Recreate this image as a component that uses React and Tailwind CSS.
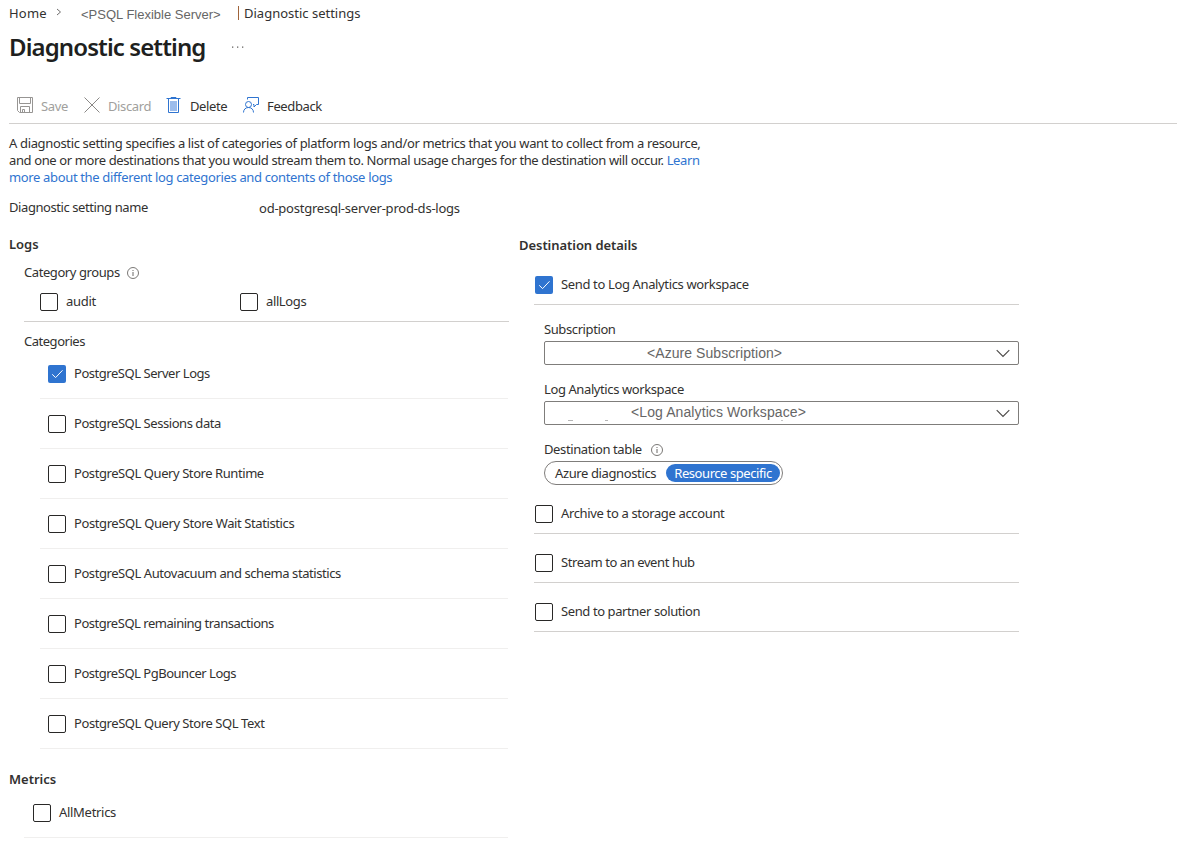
import React from "react";

const categories = [
  { label: "PostgreSQL Server Logs", checked: true, tracking: "tracking-[-0.46px]" },
  { label: "PostgreSQL Sessions data", tracking: "tracking-[-0.45px]" },
  { label: "PostgreSQL Query Store Runtime", tracking: "tracking-[-0.43px]" },
  { label: "PostgreSQL Query Store Wait Statistics", tracking: "tracking-[-0.4px]" },
  { label: "PostgreSQL Autovacuum and schema statistics", tracking: "tracking-[-0.43px]" },
  { label: "PostgreSQL remaining transactions", tracking: "tracking-[-0.48px]" },
  { label: "PostgreSQL PgBouncer Logs", tracking: "tracking-[-0.48px]" },
  { label: "PostgreSQL Query Store SQL Text", tracking: "tracking-[-0.42px]" },
];

function Checkbox({ label, checked, tracking = "" }) {
  return (
    <label className="flex h-[18px] items-center gap-2">
      {checked ? (
        <span className="flex size-[18px] shrink-0 items-center justify-center rounded-[2px] bg-[#2f74d0]">
          <svg width="18" height="18" viewBox="0 0 18 18" fill="none" stroke="#fff" strokeWidth="1">
            <path d="M4.200 9.300 7.600 12.600 14.500 5.300" />
          </svg>
        </span>
      ) : (
        <span className="size-[18px] shrink-0 rounded-[2px] border border-[#292827] bg-white" />
      )}
      <span className={"-mt-px whitespace-nowrap " + tracking}>{label}</span>
    </label>
  );
}

function InfoIcon() {
  return (
    <svg width="12" height="12" viewBox="0 0 12 12" fill="none" stroke="#6b6967">
      <circle cx="6" cy="6" r="5.5" strokeWidth="0.9" />
      <path d="M6 5v4M6 3v1" />
    </svg>
  );
}

function Select({ value, className, children }) {
  return (
    <div className="relative flex h-6 w-[475px] items-center justify-between rounded-[2px] border border-[#7f7d7b] pr-[8px]">
      <span className={"font-['Liberation_Sans',sans-serif] text-[14px] whitespace-nowrap text-[#666] " + className}>{value}</span>
      {children}
      <svg width="14" height="9" viewBox="0 0 14 9" fill="none" stroke="#4a4846" strokeWidth="1.1">
        <path d="M.7 1.200 7 7.500 13.300 1.200" />
      </svg>
    </div>
  );
}

export default function App() {
  return (
    <div className="h-[866px] w-[1177px] overflow-hidden bg-white pl-[9px] font-['Noto_Sans','Open_Sans',sans-serif] text-[13px] leading-[17px] text-[#323130]">
      <nav className="flex h-[26px] items-center whitespace-nowrap">
        <span className="w-[47px] tracking-[0.2px]">Home</span>
        <svg width="6" height="8" viewBox="0 0 6 8" fill="none" stroke="#605e5c" strokeWidth="0.9" className="-mt-[3px]">
          <path d="M1 1 4.5 4 1 7" />
        </svg>
        <span className="mt-[3px] ml-[19px] w-[157px] font-['Liberation_Sans',sans-serif] text-[13px] text-[#666]">&lt;PSQL Flexible Server&gt;</span>
        <span className="mr-[5px] h-[14px] w-px bg-[#a0643a]" />
        <span>Diagnostic settings</span>
      </nav>

      <header className="flex h-[42px] items-center">
        <h1 className="-mt-px w-[223px] text-[24px] leading-[32px] font-semibold tracking-[-0.9px] whitespace-nowrap text-[#201f1e]">Diagnostic setting</h1>
        <svg width="12" height="2" viewBox="0 0 12 2" fill="#605e5c">
          <path d="M0 .4h1.3v1.3H0zM5 .4h1.3v1.3H5zM10 .4h1.3v1.3H10z" />
        </svg>
      </header>

      <div className="mt-5 flex h-9 items-start border-b border-[#d2d0ce] pt-[10px] pl-2 tracking-[-0.37px] whitespace-nowrap">
        <button className="flex w-[67px] items-start gap-2 text-[#a19f9d]">
          <svg className="-mt-px" width="16" height="16" viewBox="0 0 16 16" fill="none" stroke="#979593">
            <path d="M.5.5h15v15H2.500l-2-2zM2.500.5v6h11v-6M3.500 15.500v-6h9v6M5.500 15.500v-3h2v3" />
          </svg>
          Save
        </button>
        <button className="flex w-[82px] items-start gap-2 text-[#a19f9d]">
          <svg className="-mt-px" width="16" height="16" viewBox="0 0 16 16" fill="none" stroke="#8a8886">
            <path d="M.5.5l15 15M15.5.5l-15 15" />
          </svg>
          Discard
        </button>
        <button className="flex w-[77px] items-start gap-[9px]">
          <svg className="-mt-px" width="15" height="16" viewBox="0 0 15 16" fill="none" stroke="#2f74d0">
            <path d="M.5 1.500h14M5 1.500v-1h5v1M2.500 1.500v14h10v-14" />
            <path d="M4 4h7v10H4z" fill="#9bbcec" stroke="none" />
          </svg>
          Delete
        </button>
        <button className="flex items-start gap-2">
          <svg className="-mt-px" width="16" height="16" viewBox="0 0 16 16" fill="none" stroke="#2f74d0">
            <circle cx="5.500" cy="7.500" r="3" />
            <path d="M.5 15.500c0-3 2-5 5-5s5 2 5 5M4.500 2.500v-2h11v7h-2l-2.500 2.500v-2.500h-1" />
          </svg>
          Feedback
        </button>
      </div>

      <p className="mt-[11px] w-[720px] tracking-[-0.35px] whitespace-nowrap">
        A diagnostic setting specifies a list of categories of platform logs and/or metrics that you want to collect from a resource,
        <br />
        <span className="tracking-[-0.38px]">
          and one or more destinations that you would stream them to. Normal usage charges for the destination will occur.{" "}
          <a className="text-[#2f74d0]">Learn</a>
        </span>
        <br />
        <a className="text-[#2f74d0]">more about the different log categories and contents of those logs</a>
      </p>

      <div className="mt-[13px] flex h-[18px] items-start">
        <span className="w-[250px] tracking-[-0.42px]">Diagnostic setting name</span>
        <span className="mt-px tracking-[-0.23px]">od-postgresql-server-prod-ds-logs</span>
      </div>

      <main className="flex gap-[10px]">
        <section className="w-[500px] pt-[19px]">
          <h2 className="font-semibold">Logs</h2>
          <div className="mt-[11px] ml-[15px] h-[58px] border-b border-[#d2d0ce]">
            <div className="flex items-center gap-[7px]">
              <span className="tracking-[-0.42px]">Category groups</span>
              <InfoIcon />
            </div>
            <div className="mt-[12px] flex pl-4">
              <div className="w-[200px]"><Checkbox label="audit" tracking="tracking-[-0.3px]" /></div>
              <Checkbox label="allLogs" tracking="tracking-[-0.38px]" />
            </div>
          </div>
          <h3 className="mt-[11px] ml-[15px] tracking-[-0.48px]">Categories</h3>
          <div className="-mt-px mr-px ml-[31px]">
            {categories.map((c) => (
              <div key={c.label} className="flex h-[50px] items-center border-b border-[#f0efee] pl-2">
                <Checkbox {...c} />
              </div>
            ))}
          </div>
          <h2 className="mt-[22px] font-semibold">Metrics</h2>
          <div className="mr-px ml-[15px] flex h-[50px] items-center border-b border-[#f0efee] pl-[9px]">
            <Checkbox label="AllMetrics" tracking="tracking-[-0.3px]" />
          </div>
        </section>

        <section className="w-[500px] pt-5">
          <h2 className="font-semibold tracking-[-0.05px]">Destination details</h2>
          <div className="ml-[15px]">
            <div className="mt-[22px] flex h-[29px] items-start border-b border-[#d2d0ce] pl-px">
              <Checkbox label="Send to Log Analytics workspace" checked tracking="tracking-[-0.36px]" />
            </div>
            <div className="mt-4 ml-[10px]">
              <div className="tracking-[-0.4px]">Subscription</div>
              <div className="mt-[3px]"><Select value="<Azure Subscription>" className="pl-[102px] tracking-[0.06px]" /></div>
              <div className="mt-4 tracking-[-0.4px]">Log Analytics workspace</div>
              <div className="mt-[3px]">
                <Select value="<Log Analytics Workspace>" className="-mt-px pl-[86px] tracking-[0.1px]">
                  <span className="absolute top-[18px] left-[23px] h-px w-[5px] bg-[#b5b5b5]" />
                  <span className="absolute top-[18px] left-[60px] h-px w-[3px] bg-[#b5b5b5]" />
                  <span className="absolute top-[18px] left-[236px] h-px w-[2px] bg-[#c5c5c5]" />
                </Select>
              </div>
              <div className="mt-4 flex items-center gap-[9px]">
                <span className="tracking-[-0.39px]">Destination table</span>
                <InfoIcon />
              </div>
              <div className="mt-[3px] flex h-6 w-[239px] items-center justify-between rounded-full border border-[#7f7d7b] pr-[2px] pl-[10px] whitespace-nowrap">
                <span className="tracking-[-0.38px]">Azure diagnostics</span>
                <span className="flex h-[18px] w-[114px] items-center justify-center rounded-full bg-[#2f74d0] tracking-[-0.43px] text-white">Resource specific</span>
              </div>
            </div>
            <div className="mt-5 flex h-[29px] items-start border-b border-[#d2d0ce] pl-px">
              <Checkbox label="Archive to a storage account" tracking="tracking-[-0.35px]" />
            </div>
            <div className="mt-5 flex h-[29px] items-start border-b border-[#d2d0ce] pl-px">
              <Checkbox label="Stream to an event hub" tracking="tracking-[-0.42px]" />
            </div>
            <div className="mt-5 flex h-[29px] items-start border-b border-[#d2d0ce] pl-px">
              <Checkbox label="Send to partner solution" tracking="tracking-[-0.4px]" />
            </div>
          </div>
        </section>
      </main>
    </div>
  );
}
